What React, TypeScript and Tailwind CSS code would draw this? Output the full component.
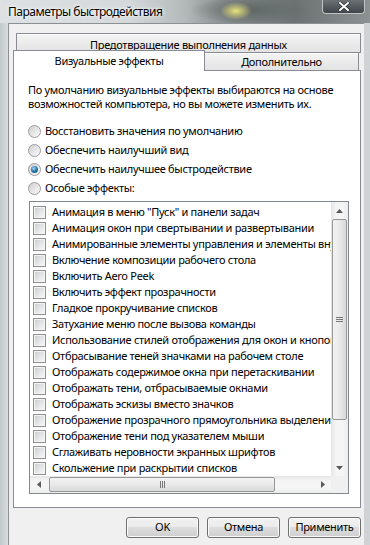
import React from 'react';

const effects = [
  'Анимация в меню "Пуск" и панели задач',
  'Анимация окон при свертывании и развертывании',
  'Анимированные элементы управления и элементы внутри окна',
  'Включение композиции рабочего стола',
  'Включить Aero Peek',
  'Включить эффект прозрачности',
  'Гладкое прокручивание списков',
  'Затухание меню после вызова команды',
  'Использование стилей отображения для окон и кнопок',
  'Отбрасывание теней значками на рабочем столе',
  'Отображать содержимое окна при перетаскивании',
  'Отображать тени, отбрасываемые окнами',
  'Отображать эскизы вместо значков',
  'Отображение прозрачного прямоугольника выделения',
  'Отображение тени под указателем мыши',
  'Сглаживать неровности экранных шрифтов',
  'Скольжение при раскрытии списков',
];

const radios = [
  { label: 'Восстановить значения по умолчанию', checked: false },
  { label: 'Обеспечить наилучший вид', checked: false },
  { label: 'Обеспечить наилучшее быстродействие', checked: true },
  { label: 'Особые эффекты:', checked: false },
];

const Checkbox = () => (
  <span className="flex h-[13px] w-[13px] shrink-0 items-center justify-center border border-[#8e8f8f] bg-[#f4f4f4]">
    <span className="h-[9px] w-[9px] bg-gradient-to-br from-[#cdd0d4] to-[#f7f7f7]" />
  </span>
);

const Radio = ({ checked }: { checked: boolean }) => (
  <span className="flex h-[13px] w-[13px] shrink-0 items-center justify-center rounded-full border border-[#9a9a9a] bg-gradient-to-br from-[#d0d0d0] to-[#fbfbfb]">
    {checked && (
      <span className="h-[7px] w-[7px] rounded-full bg-[radial-gradient(circle_at_40%_35%,#a8e0ff_0%,#2f7bb0_45%,#12406a_100%)]" />
    )}
  </span>
);

const Arrow = ({ dir }: { dir: 'up' | 'down' | 'left' | 'right' }) => {
  const pts = {
    up: '0,4 3.5,0 7,4',
    down: '0,0 3.5,4 7,0',
    left: '4,0 0,3.5 4,7',
    right: '0,0 4,3.5 0,7',
  }[dir];
  const vertical = dir === 'up' || dir === 'down';
  return (
    <svg width={vertical ? 7 : 4} height={vertical ? 4 : 7} className="block">
      <polygon points={pts} fill="#5a5a5a" />
    </svg>
  );
};

const Button = ({ children }: { children: React.ReactNode }) => (
  <div className="flex h-[21px] w-[73px] items-center justify-center rounded-[3px] border border-[#707070] bg-[linear-gradient(#f2f2f2_0%,#ebebeb_50%,#dddddd_50%,#cfcfcf_100%)] text-black shadow-[inset_0_0_0_1px_#fbfbfb]">
    {children}
  </div>
);

export default function App() {
  return (
    <div className="flex h-[545px] w-[370px] flex-col overflow-hidden bg-[linear-gradient(90deg,#c3c8cc_0%,#d7dbde_2%,#cfd3d6_100%)] font-['Segoe_UI','Noto_Sans',sans-serif] text-[11px] tracking-[-0.3px] text-black">
      {/* Title bar */}
      <div className="relative flex h-[23px] shrink-0 items-center bg-[radial-gradient(16px_9px_at_236px_11px,#e9e37c,transparent),radial-gradient(60px_14px_at_250px_10px,#5f6666,transparent),linear-gradient(90deg,#dde1e4_0%,#d4d8db_35%,#b3b8b8_50%,#858b8b_62%,#6d7373_80%,#8c9191_100%)] pl-[8px]">
        <span className="text-[12px] leading-none tracking-[-0.5px] [text-shadow:0_0_6px_#ffffff,0_0_3px_#ffffff]">
          Параметры быстродействия
        </span>
        <div className="absolute right-[5px] top-0 flex h-[14px] w-[43px] items-center justify-center rounded-b-[4px] border border-t-0 border-[#bfc3c6] bg-[linear-gradient(#6b7175,#3f4548)]">
          <svg width="12" height="9" viewBox="0 0 12 9">
            <path d="M2 1 L10 8 M10 1 L2 8" stroke="#2a2e30" strokeWidth="3.4" strokeLinecap="square" />
            <path d="M2 1 L10 8 M10 1 L2 8" stroke="#ffffff" strokeWidth="2" strokeLinecap="square" />
          </svg>
        </div>
      </div>

      {/* Client area */}
      <div className="ml-[8px] w-[356px] flex-1 border-l border-t border-[#8b9095] bg-[#f0f0f0] pl-[4px] pt-[9px]">
        <div className="w-[348px]">
          {/* Back tab row */}
          <div className="ml-[3px] flex h-[20px] items-start justify-center border border-[#898c95] bg-gradient-to-b from-[#f4f4f4] to-[#e3e3e3] pt-[3px] shadow-[inset_0_1px_0_#ffffff]">
            Предотвращение выполнения данных
          </div>
          {/* Front tab row */}
          <div className="relative z-10 -mt-[3px] flex h-[21px] items-end">
            <div className="flex h-[21px] w-[192px] items-center justify-center border border-b-0 border-[#898c95] bg-white">
              Визуальные эффекты
            </div>
            <div className="mb-[1px] mr-[2px] flex h-[18px] flex-1 items-center justify-center border border-b-0 border-l-0 border-[#898c95] bg-gradient-to-b from-[#f4f4f4] to-[#e3e3e3] pt-[1px] shadow-[inset_0_1px_0_#ffffff]">
              Дополнительно
            </div>
          </div>

          {/* Tab panel */}
          <div className="-mt-[1px] h-[438px] border border-[#898c95] bg-white pl-[14px] pt-[12px]">
            <p className="whitespace-nowrap leading-[14px]">
              По умолчанию визуальные эффекты выбираются на основе
              <br />
              возможностей компьютера, но вы можете изменить их.
            </p>

            <div className="mt-[11px] flex flex-col">
              {radios.map((r) => (
                <div key={r.label} className="flex h-[19px] items-center gap-[4px]">
                  <Radio checked={r.checked} />
                  <span>{r.label}</span>
                </div>
              ))}
            </div>

            {/* List box */}
            <div className="ml-[1px] mt-[3px] flex h-[293px] w-[320px] flex-col border border-[#828790] bg-white">
              <div className="flex h-[274px]">
                <div className="flex-1 overflow-hidden pt-[2px]">
                  {effects.map((e) => (
                    <div key={e} className="flex h-[16px] items-center gap-[6px] whitespace-nowrap pl-[3px]">
                      <Checkbox />
                      <span>{e}</span>
                    </div>
                  ))}
                </div>
                {/* Vertical scrollbar */}
                <div className="flex w-[17px] flex-col bg-[linear-gradient(90deg,#e6e6e6,#f5f5f5_30%,#f5f5f5_70%,#ececec)]">
                  <div className="flex h-[17px] items-center justify-center">
                    <Arrow dir="up" />
                  </div>
                  <div className="mx-[1px] flex h-[201px] items-center justify-center rounded-[2px] border border-[#979797] bg-[linear-gradient(90deg,#f3f3f3,#e9e9e9_50%,#d9d9d9)]">
                    <div className="flex flex-col gap-[1px]">
                      <span className="h-[1px] w-[7px] bg-[#777]" />
                      <span className="h-[1px] w-[7px] bg-[#777]" />
                      <span className="h-[1px] w-[7px] bg-[#777]" />
                    </div>
                  </div>
                  <div className="flex-1" />
                  <div className="flex h-[17px] items-center justify-center">
                    <Arrow dir="down" />
                  </div>
                </div>
              </div>
              {/* Horizontal scrollbar */}
              <div className="flex h-[17px]">
                <div className="flex flex-1 items-center bg-[linear-gradient(#e6e6e6,#f5f5f5_30%,#f5f5f5_70%,#ececec)]">
                  <div className="flex w-[17px] justify-center">
                    <Arrow dir="left" />
                  </div>
                  <div className="ml-[2px] flex h-[15px] w-[226px] items-center justify-center rounded-[2px] border border-[#979797] bg-[linear-gradient(#f3f3f3,#e9e9e9_50%,#d9d9d9)]">
                    <div className="flex gap-[1px]">
                      <span className="h-[7px] w-[1px] bg-[#777]" />
                      <span className="h-[7px] w-[1px] bg-[#777]" />
                      <span className="h-[7px] w-[1px] bg-[#777]" />
                    </div>
                  </div>
                  <div className="flex-1" />
                  <div className="flex w-[17px] justify-center">
                    <Arrow dir="right" />
                  </div>
                </div>
                <div className="w-[17px] bg-[#f0f0f0]" />
              </div>
            </div>
          </div>

          {/* Dialog buttons */}
          <div className="mt-[9px] flex justify-end gap-[8px]">
            <Button>OK</Button>
            <Button>Отмена</Button>
            <Button>Применить</Button>
          </div>
        </div>
      </div>
    </div>
  );
}
